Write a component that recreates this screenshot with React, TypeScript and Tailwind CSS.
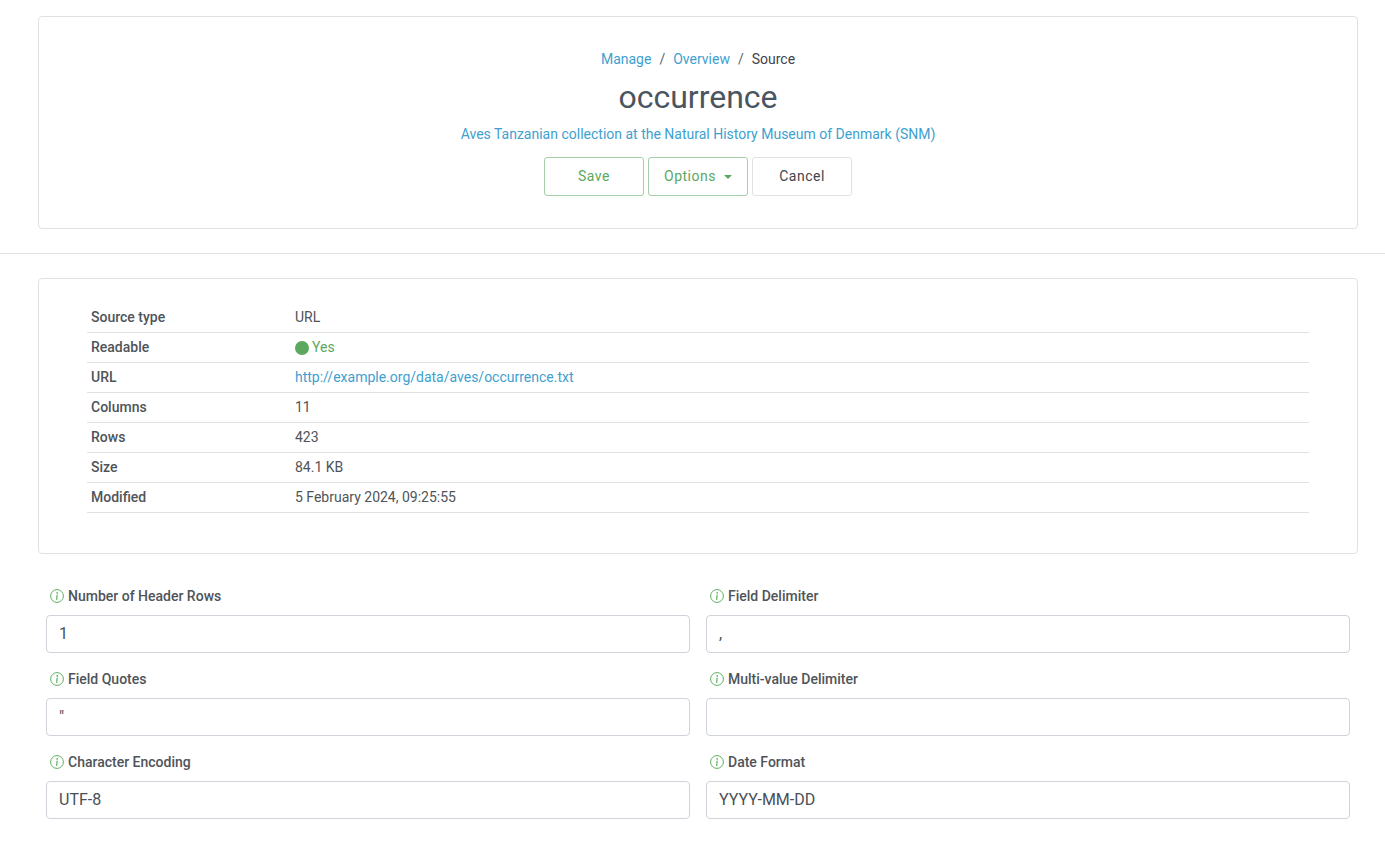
import React from "react";

const Info = () => (
  <svg width="14" height="14" viewBox="0 0 14 14" fill="none" className="shrink-0 mb-px">
    <circle cx="7" cy="7" r="6.4" stroke="#5cb060" strokeWidth="1" />
    <circle cx="7.2" cy="3.9" r="0.85" fill="#5cb060" />
    <path d="M7.1 6 L6.7 10.4" stroke="#5cb060" strokeWidth="1.2" strokeLinecap="round" />
  </svg>
);

const rows: [string, React.ReactNode][] = [
  ["Source type", "URL"],
  [
    "Readable",
    <span className="flex items-center gap-[3px] text-[#5ba85e]">
      <span className="w-[14px] h-[14px] rounded-full bg-[#5ba85e]" />
      Yes
    </span>,
  ],
  ["URL", <span className="text-[#3e9fd0]">http://example.org/data/aves/occurrence.txt</span>],
  ["Columns", "11"],
  ["Rows", "423"],
  ["Size", "84.1 KB"],
  ["Modified", "5 February 2024, 09:25:55"],
];

const fields: [string, string][] = [
  ["Number of Header Rows", "1"],
  ["Field Delimiter", ","],
  ["Field Quotes", '"'],
  ["Multi-value Delimiter", ""],
  ["Character Encoding", "UTF-8"],
  ["Date Format", "YYYY-MM-DD"],
];

const Field = ({ label, value }: { label: string; value: string }) => (
  <div className="flex flex-col">
    <div className="flex items-center gap-1 h-[19px] pl-1 text-[14px] font-medium text-[#4f5459]">
      <Info />
      <span>{label}</span>
    </div>
    <div className="mt-[9px] h-[38px] flex items-center px-3 border border-[#ced4da] rounded-[4px] text-[16px] text-[#495057]">
      {value}
    </div>
  </div>
);

export default function App() {
  return (
    <div className="bg-white min-h-[841px] pt-4 font-['Roboto',sans-serif] text-[14px] text-[#495057] antialiased">
      <div className="ml-[38px] mr-[27px] h-[213px] border border-[#dee2e6] rounded-[4px] flex flex-col items-center pt-[32px]">
        <div className="flex items-center h-5 leading-5 text-[14px]">
          <span className="text-[#3e9fd0]">Manage</span>
          <span className="px-2 text-[#5c636a]">/</span>
          <span className="text-[#3e9fd0]">Overview</span>
          <span className="px-2 text-[#5c636a]">/</span>
          <span className="text-[#3f444a]">Source</span>
        </div>
        <h1 className="mt-[9px] text-[32px] leading-[38px] font-normal text-[#4a5560]">occurrence</h1>
        <div className="mt-[8px] h-5 leading-5 text-[#3e9fd0]">
          Aves Tanzanian collection at the Natural History Museum of Denmark (SNM)
        </div>
        <div className="mt-[13px] flex gap-1">
          <div className="w-[100px] h-[39px] flex items-center justify-center border border-[#a5d0a7] rounded-[3px] text-[#5ba85e] tracking-[0.5px]">
            Save
          </div>
          <div className="w-[100px] h-[39px] flex items-center justify-center gap-[8px] border border-[#a5d0a7] rounded-[3px] text-[#5ba85e] tracking-[0.5px]">
            Options
            <span className="w-0 h-0 border-x-[4px] border-x-transparent border-t-[4px] border-t-[#5ba85e]" />
          </div>
          <div className="w-[100px] h-[39px] flex items-center justify-center border border-[#dee2e6] rounded-[3px] text-[#3f444a] tracking-[0.5px]">
            Cancel
          </div>
        </div>
      </div>

      <hr className="mt-6 border-0 border-t border-[#dee2e6]" />

      <div className="mt-6 ml-[38px] mr-[27px] h-[276px] border border-[#dee2e6] rounded-[4px] pt-[24px] px-[48px]">
        {rows.map(([k, v]) => (
          <div key={k} className="flex items-center h-[30px] border-b border-[#dee2e6]">
            <div className="w-[208px] pl-1 font-medium text-[#4f5459]">{k}</div>
            <div className="flex-1 text-[#4f5459]">{v}</div>
          </div>
        ))}
      </div>

      <div className="mt-[33px] ml-[46px] mr-[35px] grid grid-cols-2 gap-x-4 gap-y-[17px]">
        {fields.map(([l, v]) => (
          <Field key={l} label={l} value={v} />
        ))}
      </div>
    </div>
  );
}
